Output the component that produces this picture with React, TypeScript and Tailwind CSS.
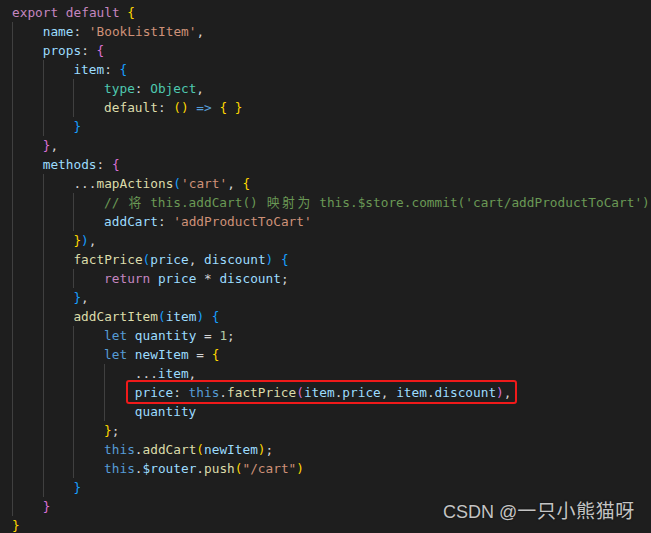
import React from 'react';

// token colour classes (VS Code Dark+ with bracket pair colours)
const tone: Record<string, string> = {
  K: 'text-[#c586c0]',
  P: 'text-[#9cdcfe]',
  S: 'text-[#ce9178]',
  F: 'text-[#dcdcaa]',
  B: 'text-[#569cd6]',
  T: 'text-[#4ec9b0]',
  N: 'text-[#b5cea8]',
  C: 'text-[#6a9955]',
  W: 'text-[#d4d4d4]',
  G1: 'text-[#ffd700]',
  G2: 'text-[#da70d6]',
  G3: 'text-[#179fff]',
};

type Tok = [string, string];
type Line = { indent: number; toks: Tok[]; boxed?: boolean };

const lines: Line[] = [
  { indent: 0, toks: [['export', 'K'], [' ', 'W'], ['default', 'K'], [' ', 'W'], ['{', 'G1']] },
  { indent: 1, toks: [['name', 'P'], [': ', 'W'], ["'BookListItem'", 'S'], [',', 'W']] },
  { indent: 1, toks: [['props', 'P'], [': ', 'W'], ['{', 'G2']] },
  { indent: 2, toks: [['item', 'P'], [': ', 'W'], ['{', 'G3']] },
  { indent: 3, toks: [['type', 'T'], [': ', 'W'], ['Object', 'T'], [',', 'W']] },
  { indent: 3, toks: [['default', 'F'], [': ', 'W'], ['(', 'G1'], [')', 'G1'], [' ', 'W'], ['=>', 'B'], [' ', 'W'], ['{', 'G1'], [' ', 'W'], ['}', 'G1']] },
  { indent: 2, toks: [['}', 'G3']] },
  { indent: 1, toks: [['}', 'G2'], [',', 'W']] },
  { indent: 1, toks: [['methods', 'P'], [': ', 'W'], ['{', 'G2']] },
  { indent: 2, toks: [['...', 'W'], ['mapActions', 'F'], ['(', 'G3'], ["'cart'", 'S'], [', ', 'W'], ['{', 'G1']] },
  { indent: 3, toks: [["// 将 this.addCart() 映射为 this.$store.commit('cart/addProductToCart')", 'C']] },
  { indent: 3, toks: [['addCart', 'P'], [': ', 'W'], ["'addProductToCart'", 'S']] },
  { indent: 2, toks: [['}', 'G1'], [')', 'G3'], [',', 'W']] },
  { indent: 2, toks: [['factPrice', 'F'], ['(', 'G3'], ['price', 'P'], [', ', 'W'], ['discount', 'P'], [')', 'G3'], [' ', 'W'], ['{', 'G3']] },
  { indent: 3, toks: [['return', 'K'], [' ', 'W'], ['price', 'P'], [' * ', 'W'], ['discount', 'P'], [';', 'W']] },
  { indent: 2, toks: [['}', 'G3'], [',', 'W']] },
  { indent: 2, toks: [['addCartItem', 'F'], ['(', 'G3'], ['item', 'P'], [')', 'G3'], [' ', 'W'], ['{', 'G3']] },
  { indent: 3, toks: [['let', 'B'], [' ', 'W'], ['quantity', 'P'], [' = ', 'W'], ['1', 'N'], [';', 'W']] },
  { indent: 3, toks: [['let', 'B'], [' ', 'W'], ['newItem', 'P'], [' = ', 'W'], ['{', 'G1']] },
  { indent: 4, toks: [['...', 'W'], ['item', 'P'], [',', 'W']] },
  {
    indent: 4,
    boxed: true,
    toks: [['price', 'P'], [': ', 'W'], ['this', 'B'], ['.', 'W'], ['factPrice', 'F'], ['(', 'G2'], ['item', 'P'], ['.', 'W'], ['price', 'P'], [', ', 'W'], ['item', 'P'], ['.', 'W'], ['discount', 'P'], [')', 'G2'], [',', 'W']],
  },
  { indent: 4, toks: [['quantity', 'P']] },
  { indent: 3, toks: [['}', 'G1'], [';', 'W']] },
  { indent: 3, toks: [['this', 'B'], ['.', 'W'], ['addCart', 'F'], ['(', 'G1'], ['newItem', 'P'], [')', 'G1'], [';', 'W']] },
  { indent: 3, toks: [['this', 'B'], ['.', 'W'], ['$router', 'P'], ['.', 'W'], ['push', 'F'], ['(', 'G1'], ['"/cart"', 'S'], [')', 'G1']] },
  { indent: 2, toks: [['}', 'G3']] },
  { indent: 1, toks: [['}', 'G2']] },
  { indent: 0, toks: [['}', 'G1']] },
];

// CJK glyphs take two monospace cells in the editor
const renderText = (text: string) =>
  Array.from(text).map((ch, i) =>
    /[\u4e00-\u9fff]/.test(ch) ? (
      <span key={i} className="inline-block w-[15.35px] text-center">
        {ch}
      </span>
    ) : (
      ch
    )
  );

const CodeLine = ({ line }: { line: Line }) => (
  <div className="flex h-[19px] items-center whitespace-pre">
    {Array.from({ length: line.indent }).map((_, i) => (
      <span key={i} className="h-full w-[30.7px] shrink-0 border-l border-[#404040]" />
    ))}
    <span className="relative">
      {line.toks.map(([text, t], i) => (
        <span key={i} className={tone[t]}>
          {renderText(text)}
        </span>
      ))}
      {line.boxed && (
        <span className="absolute -left-[9px] -right-[6px] -top-[3px] -bottom-[2px] rounded-[3px] border-[2.5px] border-[#f01a1a]" />
      )}
    </span>
  </div>
);

export default function App() {
  return (
    <div className="relative h-[533px] w-[651px] overflow-hidden bg-[#1e1e1e] pl-[12px] pt-[3px] font-['DejaVu_Sans_Mono','Noto_Sans_CJK_SC',monospace] text-[12.75px] leading-[19px] text-[#d4d4d4]">
      {lines.map((line, i) => (
        <CodeLine key={i} line={line} />
      ))}
      <div className="absolute left-[443px] top-[499px] whitespace-nowrap font-['Liberation_Sans','Noto_Sans_CJK_SC',sans-serif] text-[18px] leading-[26px] text-[#c4c4c4] [text-shadow:0_0_2px_rgba(0,0,0,0.6)]">
        CSDN @<span className="text-[19px] tracking-[0.6px]">一只小熊猫呀</span>
      </div>
    </div>
  );
}
